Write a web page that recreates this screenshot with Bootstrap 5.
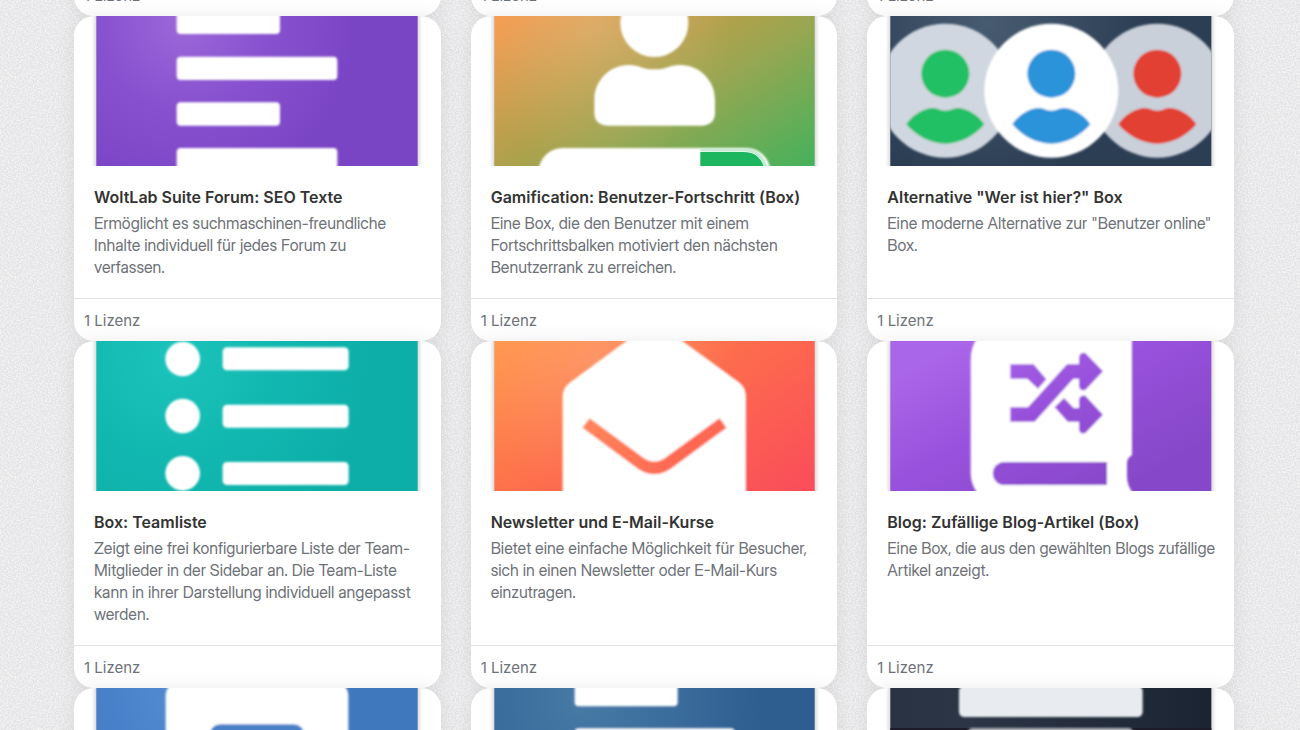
<!DOCTYPE html>
<html lang="de">
<head>
<meta charset="utf-8">
<meta name="viewport" content="width=device-width, initial-scale=1">
<title>Lizenzen</title>
<link href="https://cdn.jsdelivr.net/npm/bootstrap@5.3.0/dist/css/bootstrap.min.css" rel="stylesheet">
<style>
body{
  font-family:Inter,"Liberation Sans",sans-serif;font-size:15px;line-height:22px;color:#6d7178;
  background:#e9e9eb url("data:image/svg+xml,%3Csvg xmlns='http://www.w3.org/2000/svg' width='200' height='200'%3E%3Cfilter id='n'%3E%3CfeTurbulence type='fractalNoise' baseFrequency='.6' numOctaves='3' stitchTiles='stitch'/%3E%3CfeColorMatrix values='0 0 0 0 1 0 0 0 0 1 0 0 0 0 1 3 0 0 0 -1.1'/%3E%3C/filter%3E%3Crect width='200' height='200' fill='%23e4e4e6'/%3E%3Crect width='200' height='200' filter='url(%23n)' opacity='.55'/%3E%3C/svg%3E");
}
.catalog{padding:0 66px 0 74px;margin-top:-27px}
.product{border:0;border-radius:20px;box-shadow:0 0 20px rgba(0,0,0,.08)}
.cover{height:150px}
.cover svg{display:block;width:100%;height:150px}
.product .card-body{padding:20px 16px 20px 20px}
.product-title{font-size:16px;line-height:22px;font-weight:600;margin-bottom:4px}
.product-title a{color:#333}
.product-text{font-family:"Inter Display",Inter,sans-serif;font-size:16px}
.product .card-footer{background:none;border-top:1px solid #dfdfe1;padding:11px 10px 9px}
.back{filter:url(#halo);fill:#000;opacity:.2}
.icon{filter:url(#soft)}
</style>
</head>
<body class="vh-100 overflow-hidden">
<svg width="0" height="0" class="position-absolute" aria-hidden="true">
  <defs>
    <filter id="soft" x="-5%" y="-5%" width="110%" height="110%"><feGaussianBlur stdDeviation="3"/></filter>
    <filter id="halo" x="-5%" y="-5%" width="110%" height="110%"><feGaussianBlur stdDeviation="6"/></filter>
    <radialGradient id="g1" gradientUnits="userSpaceOnUse" cx="370" cy="70" r="520"><stop offset="0" stop-color="#9b68d8"/><stop offset=".5" stop-color="#8750cf"/><stop offset="1" stop-color="#7a45c5"/></radialGradient>
    <linearGradient id="g2" gradientUnits="userSpaceOnUse" x1="102" y1="48" x2="579" y2="825"><stop offset="0" stop-color="#f7984a"/><stop offset=".42" stop-color="#b0a14c"/><stop offset=".55" stop-color="#9ba651"/><stop offset="1" stop-color="#3fb25c"/></linearGradient>
    <radialGradient id="shine" gradientUnits="userSpaceOnUse" cx="400" cy="80" r="420"><stop offset="0" stop-color="#fff" stop-opacity=".16"/><stop offset="1" stop-color="#fff" stop-opacity="0"/></radialGradient>
    <radialGradient id="g3" gradientUnits="userSpaceOnUse" cx="380" cy="70" r="480"><stop offset="0" stop-color="#475b70"/><stop offset="1" stop-color="#2c3e53"/></radialGradient>
    <radialGradient id="g4" gradientUnits="userSpaceOnUse" cx="340" cy="80" r="600"><stop offset="0" stop-color="#1bc4bb"/><stop offset=".5" stop-color="#11b8b0"/><stop offset="1" stop-color="#0daea8"/></radialGradient>
    <linearGradient id="g5" gradientUnits="userSpaceOnUse" x1="102" y1="33" x2="620" y2="780"><stop offset="0" stop-color="#ff9345"/><stop offset=".5" stop-color="#fd6b4d"/><stop offset="1" stop-color="#fa4d5a"/></linearGradient>
    <linearGradient id="g5b" gradientUnits="userSpaceOnUse" x1="370" y1="270" x2="640" y2="430"><stop offset="0" stop-color="#ff865b"/><stop offset="1" stop-color="#fe6853"/></linearGradient>
    <linearGradient id="g6" gradientUnits="userSpaceOnUse" x1="300" y1="33" x2="600" y2="583"><stop offset="0" stop-color="#aa66e9"/><stop offset=".45" stop-color="#9851dc"/><stop offset="1" stop-color="#8648c9"/></linearGradient>
    <radialGradient id="g7" gradientUnits="userSpaceOnUse" cx="370" cy="160" r="520"><stop offset="0" stop-color="#538dd0"/><stop offset=".5" stop-color="#477fc8"/><stop offset="1" stop-color="#4078bd"/></radialGradient>
    <radialGradient id="g8" gradientUnits="userSpaceOnUse" cx="370" cy="180" r="540"><stop offset="0" stop-color="#487aa5"/><stop offset=".5" stop-color="#3a6c9c"/><stop offset="1" stop-color="#2e5d8f"/></radialGradient>
    <linearGradient id="g9" x1="0" x2="1" y1="0" y2="0"><stop offset="0" stop-color="#293343"/><stop offset=".25" stop-color="#2c3546"/><stop offset="1" stop-color="#1b2431"/></linearGradient>
    <path id="bust" d="M-117 100C-98 70-62 51-38 51C-22 51-18 59 0 59C18 59 22 51 38 51C62 51 98 70 117 100C90 132 48 158 0 158C-48 158-90 132-117 100Z"/>
  </defs>
</svg>

<main class="catalog">
  <div class="row row-cols-3 g-0" style="--bs-gutter-x:30px">
    <div class="col"><article class="card product"><div class="card-footer">1 Lizenz</div></article></div>
    <div class="col"><article class="card product"><div class="card-footer">1 Lizenz</div></article></div>
    <div class="col"><article class="card product"><div class="card-footer">1 Lizenz</div></article></div>

    <div class="col"><article class="card product h-100">
      <div class="cover"><svg viewBox="42 48 1100 450" preserveAspectRatio="xMidYMid slice" aria-hidden="true">
        <rect class="back" x="105" y="0" width="972" height="560"/><rect x="109" y="0" width="964" height="560" fill="url(#g1)"/>
        <g class="icon" fill="#fff"><rect x="350" y="33" width="310" height="69" rx="12"/><rect x="350" y="170" width="482" height="70" rx="12"/><rect x="350" y="307" width="310" height="70" rx="12"/><rect x="350" y="444" width="482" height="70" rx="12"/></g>
      </svg></div>
      <div class="card-body"><h3 class="product-title"><a href="#" class="text-decoration-none">WoltLab Suite Forum: SEO Texte</a></h3>
      <p class="product-text mb-0">Ermöglicht es suchmaschinen-freundliche Inhalte individuell für jedes Forum zu<br> verfassen.</p></div>
      <div class="card-footer">1 Lizenz</div></article></div>

    <div class="col"><article class="card product h-100">
      <div class="cover"><svg viewBox="32 48 1100 450" preserveAspectRatio="xMidYMid slice" aria-hidden="true">
        <rect class="back" x="98" y="0" width="969" height="560"/><rect x="102" y="0" width="961" height="560" fill="url(#g2)"/><rect x="102" y="0" width="961" height="560" fill="url(#shine)"/>
        <g class="icon" fill="#fff"><circle cx="582" cy="69" r="102"/>
        <path d="M402 300C402 240 450 195 505 195C540 195 540 208 582 208C624 208 624 195 660 195C716 195 764 240 764 300V340Q762 377 722 377H444Q404 377 402 340Z"/>
        <rect x="235" y="444" width="695" height="160" rx="72"/>
        </g><path d="M720 456H850C885 456 908 475 916 520H720Z" fill="#1cb65f"/>
        <path d="M720 450H855C890 450 912 474 922 520" fill="none" stroke="#c5ecd2" stroke-width="9"/>
      </svg></div>
      <div class="card-body"><h3 class="product-title"><a href="#" class="text-decoration-none">Gamification: Benutzer-Fortschritt (Box)</a></h3>
      <p class="product-text mb-0">Eine Box, die den Benutzer mit einem Fortschrittsbalken motiviert den nächsten Benutzerrank zu erreichen.</p></div>
      <div class="card-footer">1 Lizenz</div></article></div>

    <div class="col"><article class="card product h-100">
      <div class="cover"><svg viewBox="22 48 1100 450" preserveAspectRatio="xMidYMid slice" aria-hidden="true">
        <clipPath id="c3"><rect x="92" y="0" width="963" height="560"/></clipPath>
        <rect class="back" x="88" y="0" width="971" height="560"/><rect x="92" y="0" width="963" height="560" fill="url(#g3)"/>
        <g clip-path="url(#c3)"><g class="icon"><circle cx="257" cy="272" r="201" fill="#d0d7e0"/><circle cx="893" cy="272" r="201" fill="#c9d0da"/><circle cx="575" cy="272" r="201" fill="#fff"/>
        <g fill="#21c065"><circle cx="257" cy="221" r="72"/><use href="#bust" x="257" y="273"/></g>
        <g fill="#2b93da"><circle cx="575" cy="221" r="72"/><use href="#bust" x="575" y="273"/></g>
        <g fill="#e23f31"><circle cx="893" cy="221" r="72"/><use href="#bust" x="893" y="273"/></g></g></g>
      </svg></div>
      <div class="card-body"><h3 class="product-title"><a href="#" class="text-decoration-none">Alternative "Wer ist hier?" Box</a></h3>
      <p class="product-text mb-0">Eine moderne Alternative zur "Benutzer online" Box.</p></div>
      <div class="card-footer">1 Lizenz</div></article></div>

    <div class="col"><article class="card product h-100">
      <div class="cover"><svg viewBox="42 33 1100 450" preserveAspectRatio="xMidYMid slice" aria-hidden="true">
        <rect class="back" x="105" y="0" width="972" height="560"/><rect x="109" y="0" width="964" height="560" fill="url(#g4)"/>
        <g class="icon" fill="#fff"><circle cx="368" cy="87" r="52"/><circle cx="368" cy="258" r="52"/><circle cx="368" cy="430" r="52"/><rect x="488" y="52" width="378" height="69" rx="13"/><rect x="488" y="224" width="378" height="69" rx="13"/><rect x="488" y="396" width="378" height="69" rx="13"/></g>
      </svg></div>
      <div class="card-body"><h3 class="product-title"><a href="#" class="text-decoration-none">Box: Teamliste</a></h3>
      <p class="product-text mb-0">Zeigt eine frei konfigurierbare Liste der Team-Mitglieder in der Sidebar an. Die Team-Liste kann in ihrer Darstellung individuell angepasst werden.</p></div>
      <div class="card-footer">1 Lizenz</div></article></div>

    <div class="col"><article class="card product h-100">
      <div class="cover"><svg viewBox="32 33 1100 450" preserveAspectRatio="xMidYMid slice" aria-hidden="true">
        <rect class="back" x="98" y="0" width="969" height="560"/><rect x="102" y="0" width="961" height="560" fill="url(#g5)"/><rect x="102" y="0" width="961" height="560" fill="url(#shine)"/>
        <g class="icon"><path fill="#fff" d="M307 540V200Q307 174 328 158L510 24Q582-20 654 24L838 158Q857 174 857 200V540Z"/>
        <path fill="none" stroke="url(#g5b)" stroke-width="36" stroke-linejoin="round" d="M377 279L530 392Q582 436 634 392L788 279"/></g>
      </svg></div>
      <div class="card-body"><h3 class="product-title"><a href="#" class="text-decoration-none">Newsletter und E-Mail-Kurse</a></h3>
      <p class="product-text mb-0">Bietet eine einfache Möglichkeit für Besucher, sich in einen Newsletter oder E-Mail-Kurs einzutragen.</p></div>
      <div class="card-footer">1 Lizenz</div></article></div>

    <div class="col"><article class="card product h-100">
      <div class="cover"><svg viewBox="22 33 1100 450" preserveAspectRatio="xMidYMid slice" aria-hidden="true">
        <rect class="back" x="88" y="0" width="971" height="560"/><rect x="92" y="0" width="963" height="560" fill="url(#g6)"/>
        <g class="icon"><path fill="#fff" d="M333 90Q333 52 352 25H817V375Q802 384 802 400V440Q802 470 825 495H357Q333 465 333 430Z"/>
        <g fill="url(#g6)"><path d="M434 396H742V465H434A34 34 0 0 1 434 396Z"/>
        <path d="M452 103H522L560 148L535 176L503 146H452Z"/>
        <path d="M452 232H505L622 103H658V80Q662 66 677 69L730 124L677 180Q662 184 658 170V146H641L525 275H452Z"/>
        <path d="M613 204L642 234H658V208Q662 194 677 197L730 254L677 309Q662 314 658 300V275H624L585 232Z"/></g></g>
      </svg></div>
      <div class="card-body"><h3 class="product-title"><a href="#" class="text-decoration-none">Blog: Zufällige Blog-Artikel (Box)</a></h3>
      <p class="product-text mb-0">Eine Box, die aus den gewählten Blogs zufällige Artikel anzeigt.</p></div>
      <div class="card-footer">1 Lizenz</div></article></div>

    <div class="col"><article class="card product">
      <div class="cover"><svg viewBox="42 147 1100 450" preserveAspectRatio="xMidYMid slice" aria-hidden="true">
        <rect class="back" x="105" y="100" width="972" height="560"/><rect x="109" y="100" width="964" height="560" fill="url(#g7)"/>
        <g class="icon"><rect x="317" y="136" width="548" height="500" rx="30" fill="#fff"/><rect x="450" y="256" width="282" height="200" rx="30" fill="#4880c8"/></g>
      </svg></div></article></div>
    <div class="col"><article class="card product">
      <div class="cover"><svg viewBox="32 147 1100 450" preserveAspectRatio="xMidYMid slice" aria-hidden="true">
        <rect class="back" x="98" y="100" width="969" height="560"/><rect x="102" y="100" width="961" height="560" fill="url(#g8)"/>
        <g class="icon" fill="#fff"><rect x="343" y="132" width="309" height="70" rx="12"/><rect x="343" y="268" width="480" height="70" rx="12"/></g>
      </svg></div></article></div>
    <div class="col"><article class="card product">
      <div class="cover"><svg viewBox="22 147 1100 450" preserveAspectRatio="xMidYMid slice" aria-hidden="true">
        <rect class="back" x="88" y="100" width="971" height="560"/><rect x="92" y="100" width="963" height="560" fill="url(#g9)"/><rect x="92" y="267" width="963" height="300" fill="#1d1a2a"/>
        <g class="icon"><rect x="298" y="140" width="551" height="94" rx="16" fill="#e8ecf1"/><rect x="325" y="267" width="495" height="90" rx="14" fill="#b6b9c0"/></g>
      </svg></div></article></div>
  </div>
</main>
<script src="https://cdn.jsdelivr.net/npm/bootstrap@5.3.0/dist/js/bootstrap.bundle.min.js"></script>
</body>
</html>
